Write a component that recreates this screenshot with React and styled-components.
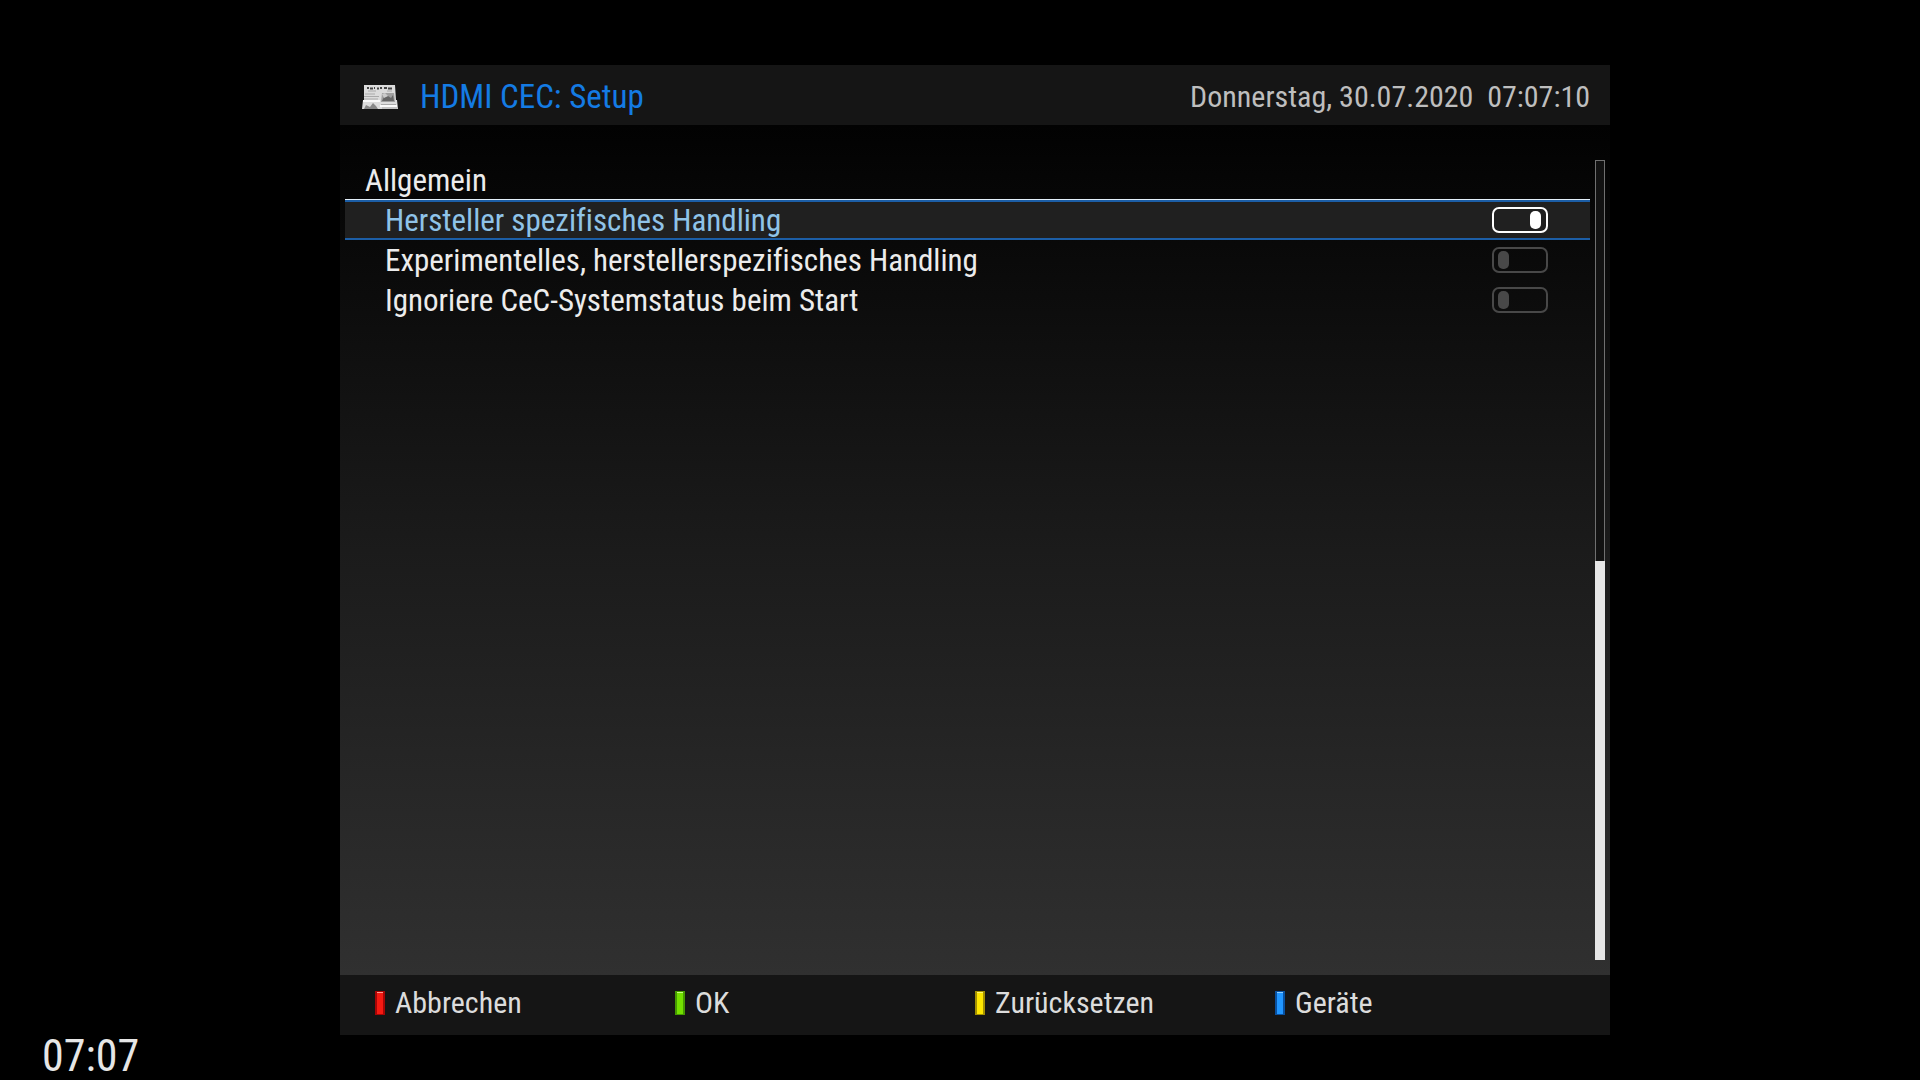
import React, { useState } from "react";
import styled, { createGlobalStyle } from "styled-components";

const GlobalStyle = createGlobalStyle`
  *, *::before, *::after { box-sizing: border-box; }
  body {
    margin: 0;
    background: #000;
    color: #ececec;
    font-family: "Roboto Condensed", "Liberation Sans Narrow", Roboto, sans-serif;
    font-size: 30px;
    line-height: 40px;
    font-variant-ligatures: none;
  }
`;

const Screen = styled.div`
  display: flex;
  flex-direction: column;
  min-height: 100vh;
  padding-top: 65px;
`;

const Panel = styled.main`
  flex: 1;
  display: flex;
  flex-direction: column;
  margin: 0 310px 0 340px;
  background: #151515;
`;

const Header = styled.header`
  display: flex;
  align-items: center;
  gap: 20px;
  height: 60px;
  padding: 3px 20px 0;
`;

const Title = styled.h1`
  flex: 1;
  margin: 0;
  color: #147be4;
  font-size: 33px;
  font-weight: 400;
`;

const DateTime = styled.time`
  color: #bebebe;
  white-space: pre;
`;

const Content = styled.section`
  flex: 1;
  display: flex;
  gap: 5px;
  padding: 35px 5px 15px;
  background: linear-gradient(#020202, #1b1b1b 50%, #303030);
`;

const Settings = styled.div`
  flex: 1;
  font-size: 31px;
`;

const GroupTitle = styled.h2`
  height: 40px;
  margin: 0;
  padding: 1px 0 0 20px;
  font-size: 31px;
  font-weight: 400;
`;

const Row = styled.label`
  display: flex;
  align-items: center;
  justify-content: space-between;
  height: 40px;
  padding: 0 42px 0 40px;
  color: ${(p) => (p.$selected ? "#8fc3e8" : "#ececec")};
  background: ${(p) => (p.$selected ? "#202020" : "transparent")};
  box-shadow: ${(p) =>
    p.$selected ? "0 -1px #e4f0fa, inset 0 2px #1c5ea6, inset 0 -2px #1c5ea6" : "none"};
`;

const RowLabel = styled.span`
  padding-top: 2px;
`;

const Toggle = styled.input`
  appearance: none;
  display: flex;
  align-items: center;
  width: 56px;
  height: 26px;
  margin: 0;
  padding: 0 5px 0 4px;
  border: 2px solid #484848;
  border-radius: 7px;

  &::before {
    content: "";
    width: 11px;
    height: 18px;
    border-radius: 5px;
    background: #484848;
  }

  &:checked {
    justify-content: flex-end;
    border-color: #fff;
  }

  &:checked::before {
    background: #fff;
  }
`;

const ScrollTrack = styled.div`
  display: flex;
  flex-direction: column;
  justify-content: flex-end;
  width: 10px;
  border: 1px solid #707070;
  background: #121212;
`;

const ScrollThumb = styled.div`
  height: 50%;
  margin: 0 -1px -1px;
  background: #e6e6e6;
`;

const Footer = styled.footer`
  display: grid;
  grid-template-columns: repeat(4, 300px);
  align-items: center;
  height: 60px;
  padding: 0 35px 4px;
`;

const ColorButton = styled.button`
  display: flex;
  align-items: center;
  gap: 10px;
  padding: 0;
  border: 0;
  background: none;
  color: #dcdcdc;
  font: inherit;

  &::before {
    content: "";
    width: 10px;
    height: 24px;
    border: 1px solid ${(p) => p.$edge};
    border-width: 1px 2px;
    background: ${(p) => p.$color};
    box-shadow: inset 0 1px ${(p) => p.$shine};
  }
`;

const Clock = styled.time`
  height: 45px;
  padding-left: 42px;
  color: #e6e6e6;
  font-size: 44px;
  line-height: 42px;
`;

function NewspaperIcon() {
  return (
    <svg width="40" height="40" viewBox="0 0 40 40" aria-hidden="true">
      <path d="M4 8h31l1 15h1l1 9H2l1-9h1z" fill="#dcdcdc" />
      <path d="M3 24h17M20 29h17" stroke="#fafafa" strokeWidth="2" />
      <path d="M7 11h2M10 11.500h3M14 11h1M17 11.500h2M20 11h2M24 11h3M28 11.500h4" stroke="#444" strokeWidth="2" />
      <path d="M8 14h8M27 14h5" stroke="#aaa" />
      <path d="M5 17h10M4 19.500h15M4 22h14M22 31h15M21 27.500h15" stroke="#aaa" />
      <path d="M22 16h12l1 9H21z" fill="#a0a0a0" />
      <path d="M22 24l2-4 4-1 3 2 2-3 1 6z" fill="#666" />
      <path d="M22 17l3-1 3 3-4 2z" fill="#ccc" />
      <path d="M4 32l2-4 4 2 3-4 3 3 2 3z" fill="#888" />
    </svg>
  );
}

const OPTIONS = [
  "Hersteller spezifisches Handling",
  "Experimentelles, herstellerspezifisches Handling",
  "Ignoriere CeC-Systemstatus beim Start",
];

const ACTIONS = [
  { label: "Abbrechen", color: "#f51a12", edge: "#a80505", shine: "#ff9a90" },
  { label: "OK", color: "#73e000", edge: "#459a00", shine: "#c4ff80" },
  { label: "Zurücksetzen", color: "#ffe600", edge: "#a39000", shine: "#fff56e" },
  { label: "Geräte", color: "#2196ff", edge: "#0850a0", shine: "#8cccff" },
];

export default function App() {
  const [values, setValues] = useState([true, false, false]);
  const toggle = (i) => setValues(values.map((v, j) => (j === i ? !v : v)));

  return (
    <>
      <GlobalStyle />
      <Screen>
        <Panel>
          <Header>
            <NewspaperIcon />
            <Title>HDMI CEC: Setup</Title>
            <DateTime>{"Donnerstag, 30.07.2020  07:07:10"}</DateTime>
          </Header>
          <Content>
            <Settings>
              <GroupTitle>Allgemein</GroupTitle>
              {OPTIONS.map((label, i) => (
                <Row key={label} $selected={i === 0}>
                  <RowLabel>{label}</RowLabel>
                  <Toggle type="checkbox" checked={values[i]} onChange={() => toggle(i)} />
                </Row>
              ))}
            </Settings>
            <ScrollTrack>
              <ScrollThumb />
            </ScrollTrack>
          </Content>
          <Footer>
            {ACTIONS.map((a) => (
              <ColorButton key={a.label} $color={a.color} $edge={a.edge} $shine={a.shine}>
                {a.label}
              </ColorButton>
            ))}
          </Footer>
        </Panel>
        <Clock>07:07</Clock>
      </Screen>
    </>
  );
}
